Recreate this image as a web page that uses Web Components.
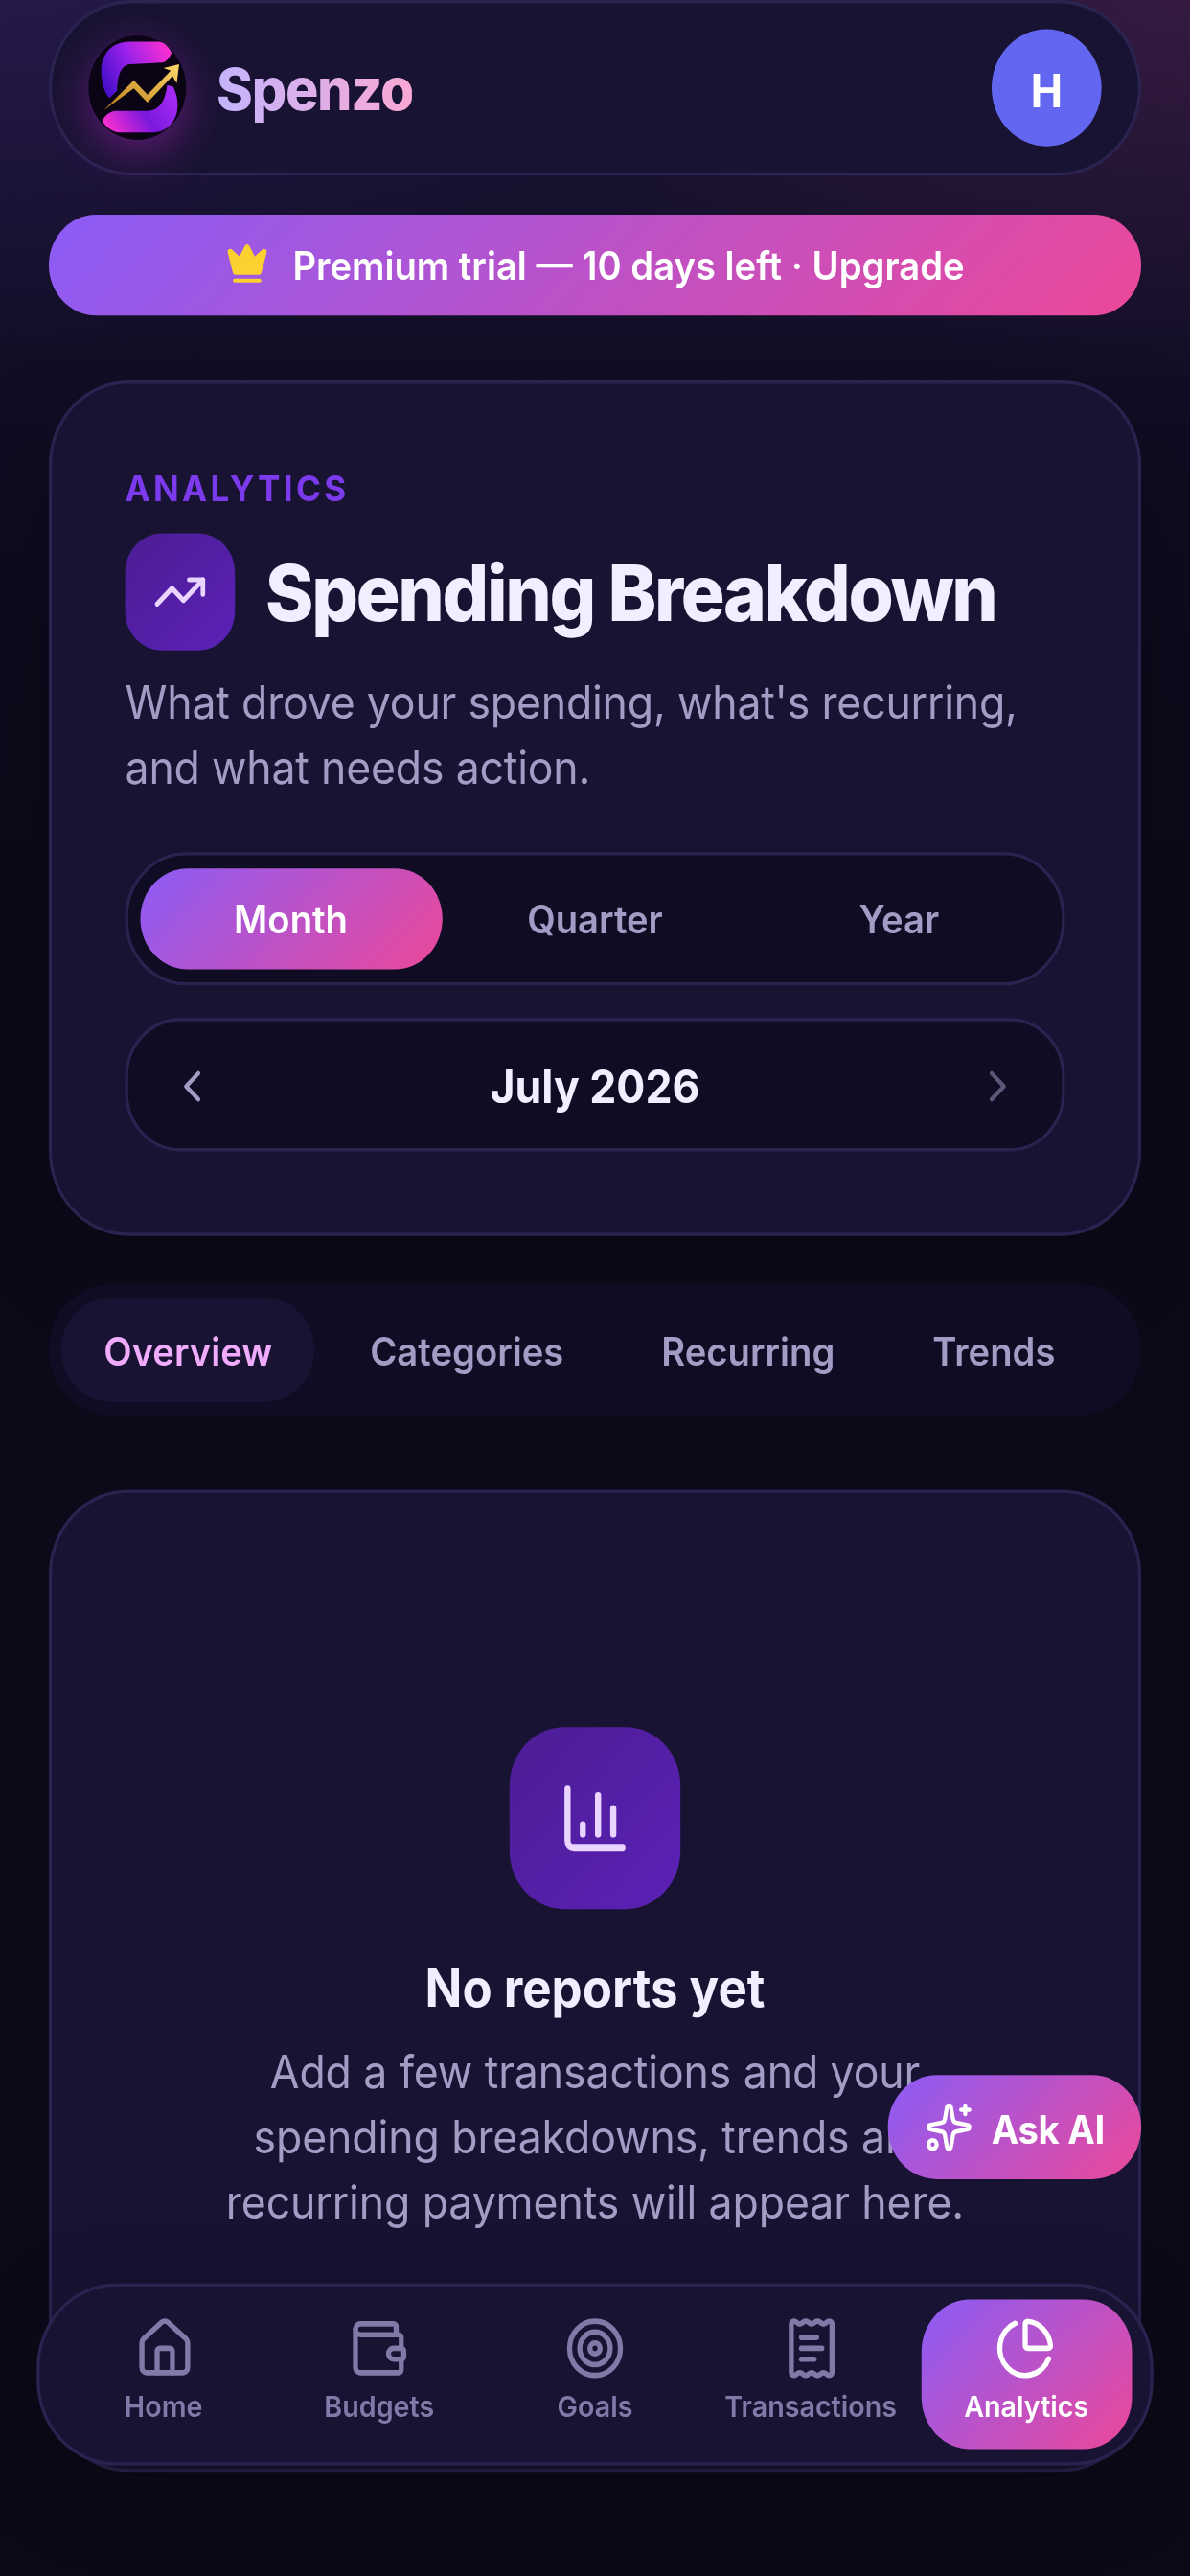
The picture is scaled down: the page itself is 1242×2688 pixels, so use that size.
<!DOCTYPE html>
<html lang="en">
<head>
<meta charset="utf-8">
<title>Spenzo</title>
<style>
    html, body { margin: 0; width: 1242px; height: 2688px; overflow: hidden; background: #0b0a19; }
</style>
</head>
<body>
<spenzo-app>
    <app-header></app-header>
    <trial-banner>Premium trial — 10 days left · Upgrade</trial-banner>
    <page-hero>
        <span slot="eyebrow">ANALYTICS</span>
        <span slot="title">Spending Breakdown</span>
        <span slot="sub">What drove your spending, what's recurring, and what needs action.</span>
        <segment-control></segment-control>
        <period-picker>July 2026</period-picker>
    </page-hero>
    <tab-strip></tab-strip>
    <empty-state>
        <span slot="title">No reports yet</span>
        Add a few transactions and your spending breakdowns, trends and recurring payments will appear here.
    </empty-state>
    <ask-ai slot="overlay">Ask AI</ask-ai>
    <bottom-nav slot="overlay">
        <nav-item icon="house">Home</nav-item>
        <nav-item icon="wallet">Budgets</nav-item>
        <nav-item icon="target">Goals</nav-item>
        <nav-item icon="receipt">Transactions</nav-item>
        <nav-item icon="pie" active>Analytics</nav-item>
    </bottom-nav>
</spenzo-app>

<script>
const GRADIENT = 'linear-gradient(135deg, #8b5cf6, #ec4899)';

const ICONS = {
    crown: '<path d="M11.562 3.266a.5.5 0 0 1 .876 0L15.39 8.87a1 1 0 0 0 1.516.294L21.183 5.5a.5.5 0 0 1 .798.519l-2.834 10.246a1 1 0 0 1-.956.734H5.81a1 1 0 0 1-.957-.734L2.02 6.02a.5.5 0 0 1 .798-.519l4.276 3.664a1 1 0 0 0 1.516-.294z"/><path d="M5 21h14"/>',
    trending: '<polyline points="22 7 13.5 15.5 8.5 10.5 2 17"/><polyline points="16 7 22 7 22 13"/>',
    left: '<path d="m15 18-6-6 6-6"/>',
    right: '<path d="m9 18 6-6-6-6"/>',
    bars: '<path d="M3 3v16a2 2 0 0 0 2 2h16"/><path d="M18 17V9"/><path d="M13 17V5"/><path d="M8 17v-3"/>',
    sparkles: '<path d="M11.017 2.814a1 1 0 0 1 1.966 0l1.051 5.558a2 2 0 0 0 1.594 1.594l5.558 1.051a1 1 0 0 1 0 1.966l-5.558 1.051a2 2 0 0 0-1.594 1.594l-1.051 5.558a1 1 0 0 1-1.966 0l-1.051-5.558a2 2 0 0 0-1.594-1.594l-5.558-1.051a1 1 0 0 1 0-1.966l5.558-1.051a2 2 0 0 0 1.594-1.594z"/><path d="M20 2v4"/><path d="M22 4h-4"/><circle cx="4" cy="20" r="2"/>',
    house: '<path d="M15 21v-8a1 1 0 0 0-1-1h-4a1 1 0 0 0-1 1v8"/><path d="M3 10a2 2 0 0 1 .709-1.528l7-5.999a2 2 0 0 1 2.582 0l7 5.999A2 2 0 0 1 21 10v9a2 2 0 0 1-2 2H5a2 2 0 0 1-2-2z"/>',
    wallet: '<path d="M19 7V4a1 1 0 0 0-1-1H5a2 2 0 0 0 0 4h15a1 1 0 0 1 1 1v4h-3a2 2 0 0 0 0 4h3a1 1 0 0 0 1-1v-2a1 1 0 0 0-1-1"/><path d="M3 5v14a2 2 0 0 0 2 2h15a1 1 0 0 0 1-1v-4"/>',
    target: '<circle cx="12" cy="12" r="10"/><circle cx="12" cy="12" r="6"/><circle cx="12" cy="12" r="2"/>',
    receipt: '<path d="M4 3a1 1 0 0 1 1-1 1.3 1.3 0 0 1 .7.2l.933.6a1.3 1.3 0 0 0 1.4 0l.934-.6a1.3 1.3 0 0 1 1.4 0l.933.6a1.3 1.3 0 0 0 1.4 0l.933-.6a1.3 1.3 0 0 1 1.4 0l.934.6a1.3 1.3 0 0 0 1.4 0l.933-.6A1.3 1.3 0 0 1 19 2a1 1 0 0 1 1 1v18a1 1 0 0 1-1 1 1.3 1.3 0 0 1-.7-.2l-.933-.6a1.3 1.3 0 0 0-1.4 0l-.934.6a1.3 1.3 0 0 1-1.4 0l-.933-.6a1.3 1.3 0 0 0-1.4 0l-.933.6a1.3 1.3 0 0 1-1.4 0l-.934-.6a1.3 1.3 0 0 0-1.4 0l-.933.6a1.3 1.3 0 0 1-.7.2 1 1 0 0 1-1-1z"/><path d="M14 8H8"/><path d="M16 12H8"/><path d="M13 16H8"/>',
    pie: '<path d="M21 12c.552 0 1.005-.449.95-.998a10 10 0 0 0-8.953-8.951c-.55-.055-.998.398-.998.95v8a1 1 0 0 0 1 1z"/><path d="M21.21 15.89A10 10 0 1 1 8 2.83"/>'
};

class UiIcon extends HTMLElement {
    connectedCallback() {
        const size = this.getAttribute('size') || 24;
        const stroke = this.getAttribute('stroke') || 2;
        const fill = this.getAttribute('fill') || 'none';
        this.attachShadow({ mode: 'open' }).innerHTML = `
            <style>
                :host { display: block; width: ${size}px; height: ${size}px; flex-shrink: 0; }
                svg { display: block; width: 100%; height: 100%; }
            </style>
            <svg viewBox="0 0 24 24" fill="${fill}" stroke="currentColor" stroke-width="${stroke}" stroke-linecap="round" stroke-linejoin="round">${ICONS[this.getAttribute('name')]}</svg>
        `;
    }
}

class SpenzoApp extends HTMLElement {
    constructor() {
        super();
        this.attachShadow({ mode: 'open' }).innerHTML = `
            <style>
                /* reference is a 390 wide layout stretched to the photo, scale it the same way */
                :host {
                    display: block;
                    position: absolute;
                    left: 0;
                    top: 0;
                    box-sizing: border-box;
                    width: 390px;
                    height: 792px;
                    padding: 0 16px;
                    overflow: hidden;
                    transform: scale(3.1846, 3.3939);
                    transform-origin: 0 0;
                    font-family: Inter, "Noto Sans", sans-serif;
                    color: #f1eeff;
                    background:
                        radial-gradient(ellipse 230px 120px at 100% 0, rgba(236, 72, 153, 0.13), transparent),
                        radial-gradient(ellipse 220px 110px at 0 0, rgba(124, 58, 237, 0.12), transparent),
                        linear-gradient(180deg, #1a1433 0, #130f29 90px, #0d0b1d 170px, #0b0a19 260px);
                }
            </style>
            <slot></slot>
            <slot name="overlay"></slot>
        `;
    }
}

class AppHeader extends HTMLElement {
    constructor() {
        super();
        this.attachShadow({ mode: 'open' }).innerHTML = `
            <style>
                :host {
                    display: flex;
                    align-items: center;
                    box-sizing: border-box;
                    height: 54px;
                    padding: 0 12px;
                    gap: 10px;
                    background: #181332;
                    border: 1px solid #2a2350;
                    border-radius: 27px;
                }
                .logo {
                    width: 32px;
                    height: 32px;
                    border-radius: 50%;
                    background: #0a0414;
                    box-shadow: 0 4px 14px rgba(192, 38, 211, 0.42);
                    flex-shrink: 0;
                }
                .logo svg { display: block; width: 100%; height: 100%; }
                .name {
                    font-size: 18px;
                    font-weight: 800;
                    letter-spacing: -0.4px;
                    background: linear-gradient(90deg, #c4b5fd, #f9a8d4);
                    -webkit-background-clip: text;
                    background-clip: text;
                    color: transparent;
                }
                .avatar {
                    margin-left: auto;
                    width: 36px;
                    height: 36px;
                    border-radius: 50%;
                    background: #6366f1;
                    color: #fff;
                    font-size: 14px;
                    font-weight: 700;
                    display: flex;
                    align-items: center;
                    justify-content: center;
                }
            </style>
            <div class="logo">
                <svg viewBox="0 0 303 323">
                    <defs>
                        <linearGradient id="top" x1="0" y1="0.6" x2="1" y2="0.2">
                            <stop offset="0" stop-color="#4a10cc"/><stop offset="0.45" stop-color="#9a22ea"/><stop offset="1" stop-color="#ff2fd0"/>
                        </linearGradient>
                        <linearGradient id="bot" x1="0" y1="0.8" x2="1" y2="0.4">
                            <stop offset="0" stop-color="#ff2fd0"/><stop offset="0.55" stop-color="#7a18dc"/><stop offset="1" stop-color="#a42af5"/>
                        </linearGradient>
                        <linearGradient id="gold" x1="0" y1="1" x2="1" y2="0">
                            <stop offset="0" stop-color="#b87a16"/><stop offset="1" stop-color="#ffd76a"/>
                        </linearGradient>
                    </defs>
                    <path fill="url(#top)" d="M265 53C250 25 235 18 215 18L125 18C65 18 32 60 32 108C32 150 45 180 60 193L85 170C85 120 100 88 130 88L235 83C250 80 258 65 265 53Z"/>
                    <path fill="url(#bot)" d="M35 263C50 240 65 233 85 233L185 233C225 233 245 200 250 153L270 158C282 180 285 200 285 215C285 265 250 300 205 300L95 300C65 300 45 280 35 263Z"/>
                    <path fill="url(#gold)" d="M40 232L140 138L185 183L262 108L238 100L290 88L282 148L268 125L185 207L140 163Z"/>
                </svg>
            </div>
            <span class="name">Spenzo</span>
            <div class="avatar">H</div>
        `;
    }
}

class TrialBanner extends HTMLElement {
    constructor() {
        super();
        this.attachShadow({ mode: 'open' }).innerHTML = `
            <style>
                :host {
                    display: flex;
                    align-items: center;
                    justify-content: center;
                    gap: 8px;
                    height: 30.7px;
                    margin-top: 12px;
                    border-radius: 16px;
                    background: ${GRADIENT};
                    color: #fff;
                    font-size: 12px;
                    font-weight: 600;
                }
                ui-icon { color: #fcd02e; }
            </style>
            <ui-icon name="crown" size="14" fill="currentColor"></ui-icon>
            <slot></slot>
        `;
    }
}

class PageHero extends HTMLElement {
    constructor() {
        super();
        this.attachShadow({ mode: 'open' }).innerHTML = `
            <style>
                :host {
                    display: block;
                    box-sizing: border-box;
                    height: 263px;
                    margin-top: 20px;
                    padding: 25px 24px 24px;
                    background: #181332;
                    border: 1px solid #2a2350;
                    border-radius: 26px;
                    box-shadow: 0 10px 30px rgba(0, 0, 0, 0.22);
                }
                .eyebrow {
                    display: block;
                    font-size: 11px;
                    line-height: 15.6px;
                    font-weight: 700;
                    letter-spacing: 1.05px;
                    color: #7c3aed;
                }
                .row { display: flex; align-items: center; gap: 10px; margin-top: 6px; }
                .tile {
                    width: 36px;
                    height: 36px;
                    border-radius: 12px;
                    background: linear-gradient(135deg, #4c1d95, #5b21b6);
                    color: #e9d5ff;
                    display: flex;
                    align-items: center;
                    justify-content: center;
                }
                .title { font-size: 24px; font-weight: 800; letter-spacing: -0.72px; color: #f1eeff; }
                .sub { margin-top: 5.4px; font-size: 14px; line-height: 20px; letter-spacing: -0.06px; color: #a49cc4; }
                .controls { margin-top: 16.1px; display: flex; flex-direction: column; gap: 10.2px; }
            </style>
            <div class="eyebrow"><slot name="eyebrow"></slot></div>
            <div class="row">
                <div class="tile"><ui-icon name="trending" size="18"></ui-icon></div>
                <div class="title"><slot name="title"></slot></div>
            </div>
            <div class="sub"><slot name="sub"></slot></div>
            <div class="controls"><slot></slot></div>
        `;
    }
}

class SegmentControl extends HTMLElement {
    constructor() {
        super();
        this.attachShadow({ mode: 'open' }).innerHTML = `
            <style>
                :host {
                    display: grid;
                    grid-template-columns: repeat(3, 1fr);
                    box-sizing: border-box;
                    height: 41px;
                    padding: 4px 3.5px;
                    background: #0f0c24;
                    border: 1px solid #2a2350;
                    border-radius: 20px;
                }
                div {
                    display: flex;
                    align-items: center;
                    justify-content: center;
                    border-radius: 16px;
                    font-size: 12px;
                    font-weight: 600;
                    color: #a49cc4;
                }
                .on { background: ${GRADIENT}; color: #fff; }
            </style>
            <div class="on">Month</div>
            <div>Quarter</div>
            <div>Year</div>
        `;
    }
}

class PeriodPicker extends HTMLElement {
    constructor() {
        super();
        this.attachShadow({ mode: 'open' }).innerHTML = `
            <style>
                :host {
                    display: flex;
                    align-items: center;
                    justify-content: space-between;
                    box-sizing: border-box;
                    height: 41.3px;
                    padding: 0 13px;
                    background: #0f0c24;
                    border: 1px solid #2a2350;
                    border-radius: 18px;
                    font-size: 14px;
                    font-weight: 700;
                    color: #f1eeff;
                }
                .prev { color: #a49cc4; }
                .next { color: #5d5678; }
            </style>
            <ui-icon class="prev" name="left" size="16"></ui-icon>
            <slot></slot>
            <ui-icon class="next" name="right" size="16"></ui-icon>
        `;
    }
}

class TabStrip extends HTMLElement {
    constructor() {
        super();
        this.attachShadow({ mode: 'open' }).innerHTML = `
            <style>
                :host {
                    display: flex;
                    gap: 4px;
                    box-sizing: border-box;
                    height: 39.5px;
                    margin-top: 15.8px;
                    padding: 4px;
                    background: #0f0c24;
                    border-radius: 20px;
                }
                div {
                    display: flex;
                    align-items: center;
                    padding: 0 14px;
                    border-radius: 16px;
                    font-size: 12px;
                    font-weight: 600;
                    color: #a49cc4;
                }
                .on { background: #181332; color: #f0abfc; }
            </style>
            <div class="on">Overview</div>
            <div>Categories</div>
            <div>Recurring</div>
            <div>Trends</div>
        `;
    }
}

class EmptyState extends HTMLElement {
    constructor() {
        super();
        this.attachShadow({ mode: 'open' }).innerHTML = `
            <style>
                :host {
                    display: flex;
                    flex-direction: column;
                    align-items: center;
                    box-sizing: border-box;
                    height: 302px;
                    margin-top: 23.3px;
                    padding: 72px 24px 0;
                    background: #181332;
                    border: 1px solid #2a2350;
                    border-radius: 26px;
                    text-align: center;
                }
                .tile {
                    width: 56px;
                    height: 56px;
                    border-radius: 18px;
                    background: linear-gradient(135deg, #4c1d95, #5b21b6);
                    color: #e9d5ff;
                    display: flex;
                    align-items: center;
                    justify-content: center;
                }
                .title { margin-top: 12px; font-size: 16px; line-height: 24px; font-weight: 700; color: #f1eeff; }
                .body { margin-top: 4px; max-width: 260px; font-size: 14px; line-height: 20px; letter-spacing: -0.03px; color: #a49cc4; }
            </style>
            <div class="tile"><ui-icon name="bars" size="24"></ui-icon></div>
            <div class="title"><slot name="title"></slot></div>
            <div class="body"><slot></slot></div>
        `;
    }
}

class AskAi extends HTMLElement {
    constructor() {
        super();
        this.attachShadow({ mode: 'open' }).innerHTML = `
            <style>
                :host {
                    position: absolute;
                    right: 16px;
                    top: 638px;
                    z-index: 2;
                    display: flex;
                    align-items: center;
                    gap: 6px;
                    box-sizing: border-box;
                    height: 32px;
                    padding: 0 12px;
                    border-radius: 16px;
                    background: ${GRADIENT};
                    color: #fff;
                    font-size: 12px;
                    font-weight: 700;
                    letter-spacing: -0.1px;
                }
            </style>
            <ui-icon name="sparkles" size="16"></ui-icon>
            <slot></slot>
        `;
    }
}

class BottomNav extends HTMLElement {
    constructor() {
        super();
        this.attachShadow({ mode: 'open' }).innerHTML = `
            <style>
                :host {
                    position: absolute;
                    left: 12px;
                    right: 12px;
                    top: 702px;
                    z-index: 3;
                    display: grid;
                    grid-template-columns: repeat(5, 1fr);
                    gap: 1.5px;
                    box-sizing: border-box;
                    height: 56px;
                    padding: 4px 6px;
                    background: #181332;
                    border: 1px solid #2a2350;
                    border-radius: 26px;
                    box-shadow: 0 8px 28px rgba(0, 0, 0, 0.3);
                }
            </style>
            <slot></slot>
        `;
    }
}

class NavItem extends HTMLElement {
    constructor() {
        super();
        const on = this.hasAttribute('active');
        this.attachShadow({ mode: 'open' }).innerHTML = `
            <style>
                :host {
                    display: flex;
                    flex-direction: column;
                    align-items: center;
                    gap: 2px;
                    padding-top: 5px;
                    border-radius: 16px;
                    font-size: 9px;
                    line-height: 12px;
                    font-weight: 600;
                    white-space: nowrap;
                    color: ${on ? '#fff' : '#8379a8'};
                    background: ${on ? GRADIENT : 'none'};
                }
            </style>
            <ui-icon name="${this.getAttribute('icon')}" size="20"></ui-icon>
            <slot></slot>
        `;
    }
}

customElements.define('ui-icon', UiIcon);
customElements.define('spenzo-app', SpenzoApp);
customElements.define('app-header', AppHeader);
customElements.define('trial-banner', TrialBanner);
customElements.define('page-hero', PageHero);
customElements.define('segment-control', SegmentControl);
customElements.define('period-picker', PeriodPicker);
customElements.define('tab-strip', TabStrip);
customElements.define('empty-state', EmptyState);
customElements.define('ask-ai', AskAi);
customElements.define('bottom-nav', BottomNav);
customElements.define('nav-item', NavItem);
</script>
</body>
</html>
